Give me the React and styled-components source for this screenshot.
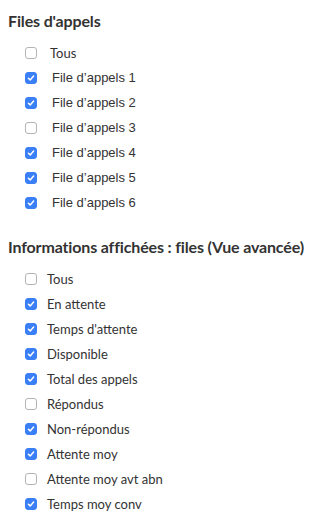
import React from 'react';
import styled, { createGlobalStyle } from 'styled-components';

const GlobalStyle = createGlobalStyle`
  body {
    margin: 0;
    background: #ffffff;
    font-family: Lato, 'Noto Sans', sans-serif;
    color: #333333;
  }
`;

const Page = styled.div`
  padding: 11px 8px 0 8px;
  display: flex;
  flex-direction: column;
`;

const Section = styled.section`
  display: flex;
  flex-direction: column;
  & + & {
    margin-top: 22px;
  }
`;

const Heading = styled.h2`
  margin: 0;
  font-family: Lato, 'Noto Sans', sans-serif;
  font-weight: 700;
  font-size: 16px;
  line-height: 20px;
  letter-spacing: -0.15px;
  white-space: nowrap;
  color: #333333;
`;

const List = styled.ul`
  list-style: none;
  margin: 9px 0 0 0;
  padding: 0 0 0 17px;
`;

const Row = styled.li`
  display: flex;
  align-items: center;
  height: 25px;
`;

const Box = styled.span`
  flex: none;
  width: 12px;
  height: 12px;
  box-sizing: border-box;
  border-radius: 3px;
  border: 1px solid ${(p) => (p.checked ? '#3a7ff6' : '#b4b4b4')};
  background: ${(p) => (p.checked ? '#3a7ff6' : '#ffffff')};
  display: flex;
  align-items: center;
  justify-content: center;
`;

const Label = styled.span`
  margin-left: ${(p) => p.gap}px;
  font-family: ${(p) => (p.arial ? "'Liberation Sans', Arial, sans-serif" : "Lato, 'Noto Sans', sans-serif")};
  font-size: 13px;
  line-height: 16px;
  white-space: nowrap;
  color: #333333;
`;

function Check({ checked }) {
  return (
    <Box checked={checked}>
      {checked && (
        <svg width="8" height="8" viewBox="0 0 8 8">
          <path d="M1.4 4.2 L3.2 5.9 L6.6 2.1" fill="none" stroke="#ffffff" strokeWidth="1.5" strokeLinecap="round" strokeLinejoin="round" />
        </svg>
      )}
    </Box>
  );
}

const queues = [
  { label: 'Tous', checked: false, arial: false, gap: 13 },
  { label: 'File d’appels 1', checked: true, arial: true, gap: 15 },
  { label: 'File d’appels 2', checked: true, arial: true, gap: 15 },
  { label: 'File d’appels 3', checked: false, arial: true, gap: 15 },
  { label: 'File d’appels 4', checked: true, arial: true, gap: 15 },
  { label: 'File d’appels 5', checked: true, arial: true, gap: 15 },
  { label: 'File d’appels 6', checked: true, arial: true, gap: 15 },
];

const infos = [
  ['Tous', false],
  ['En attente', true],
  ["Temps d'attente", true],
  ['Disponible', true],
  ['Total des appels', true],
  ['Répondus', false],
  ['Non-répondus', true],
  ['Attente moy', true],
  ['Attente moy avt abn', false],
  ['Temps moy conv', true],
];

export default function App() {
  return (
    <Page>
      <GlobalStyle />
      <Section>
        <Heading>Files d'appels</Heading>
        <List>
          {queues.map((q) => (
            <Row key={q.label}>
              <Check checked={q.checked} />
              <Label arial={q.arial} gap={q.gap}>{q.label}</Label>
            </Row>
          ))}
        </List>
      </Section>
      <Section>
        <Heading>Informations affichées : files (Vue avancée)</Heading>
        <List>
          {infos.map(([label, checked]) => (
            <Row key={label}>
              <Check checked={checked} />
              <Label gap={10}>{label}</Label>
            </Row>
          ))}
        </List>
      </Section>
    </Page>
  );
}
